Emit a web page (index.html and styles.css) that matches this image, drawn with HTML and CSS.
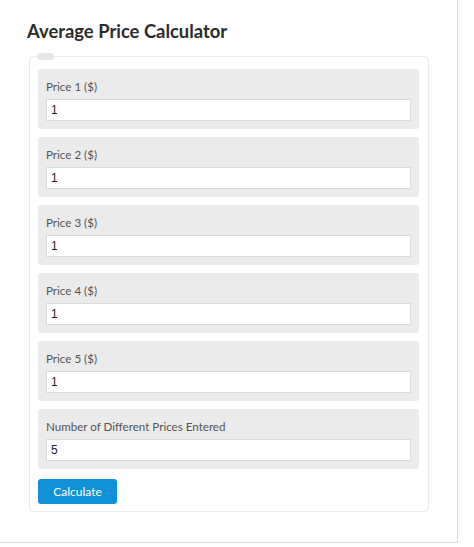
FILE: index.html
```html
<!DOCTYPE html>
<html>
<head>
<meta charset="utf-8">
<link rel="stylesheet" href="styles.css">
</head>
<body>
<div class="page">
  <h1 class="title">Average Price Calculator</h1>
  <form class="card">
    <span class="legend"></span>
    <div class="group">
      <label class="label">Price 1 ($)</label>
      <input class="input" type="text" value="1">
    </div>
    <div class="group">
      <label class="label">Price 2 ($)</label>
      <input class="input" type="text" value="1">
    </div>
    <div class="group">
      <label class="label">Price 3 ($)</label>
      <input class="input" type="text" value="1">
    </div>
    <div class="group">
      <label class="label">Price 4 ($)</label>
      <input class="input" type="text" value="1">
    </div>
    <div class="group">
      <label class="label">Price 5 ($)</label>
      <input class="input" type="text" value="1">
    </div>
    <div class="group">
      <label class="label">Number of Different Prices Entered</label>
      <input class="input" type="text" value="5">
    </div>
    <button class="btn" type="button">Calculate</button>
  </form>
</div>
</body>
</html>
```
FILE: styles.css
```css
html, body {
  margin: 0;
  padding: 0;
  background: #fff;
}
.page {
  box-sizing: border-box;
  width: 458px;
  height: 543px;
  border-right: 1px solid #d8d8d8;
  border-bottom: 1px solid #d8d8d8;
  padding-top: 20px;
}
.title {
  margin: 0 0 14px 27px;
  font-family: Lato, sans-serif;
  font-weight: 700;
  font-size: 18.4px;
  line-height: 22px;
  color: #2b2b2b;
}
.card {
  position: relative;
  margin: 0 0 0 29px;
  width: 400px;
  box-sizing: border-box;
  border: 1px solid #ececec;
  border-radius: 4px;
  padding: 12px 9px 7px 8px;
  display: flex;
  flex-direction: column;
  gap: 8px;
}
.legend {
  position: absolute;
  left: 7px;
  top: -4px;
  width: 17px;
  height: 7px;
  border-radius: 4px;
  background: #e6e6e6;
}
.group {
  background: #ebebeb;
  border-radius: 3px;
  padding: 10px 8px 8px 8px;
  display: flex;
  flex-direction: column;
  gap: 4px;
}
.label {
  font-family: Lato, sans-serif;
  font-size: 11.6px;
  line-height: 16px;
  color: #555;
}
.input {
  height: 22px;
  box-sizing: border-box;
  border: 1px solid #dcdcdc;
  background: #fff;
  padding: 0 4px;
  font-family: "Liberation Sans", Arial, sans-serif;
  font-size: 12px;
  color: #222;
  outline: none;
  margin: 0;
}
.btn {
  margin-top: 2px;
  align-self: flex-start;
  width: 79px;
  height: 25px;
  border: none;
  border-radius: 3px;
  background: #0f91d8;
  color: #fff;
  font-family: Lato, sans-serif;
  font-size: 12px;
  padding: 0;
  cursor: pointer;
}
```
